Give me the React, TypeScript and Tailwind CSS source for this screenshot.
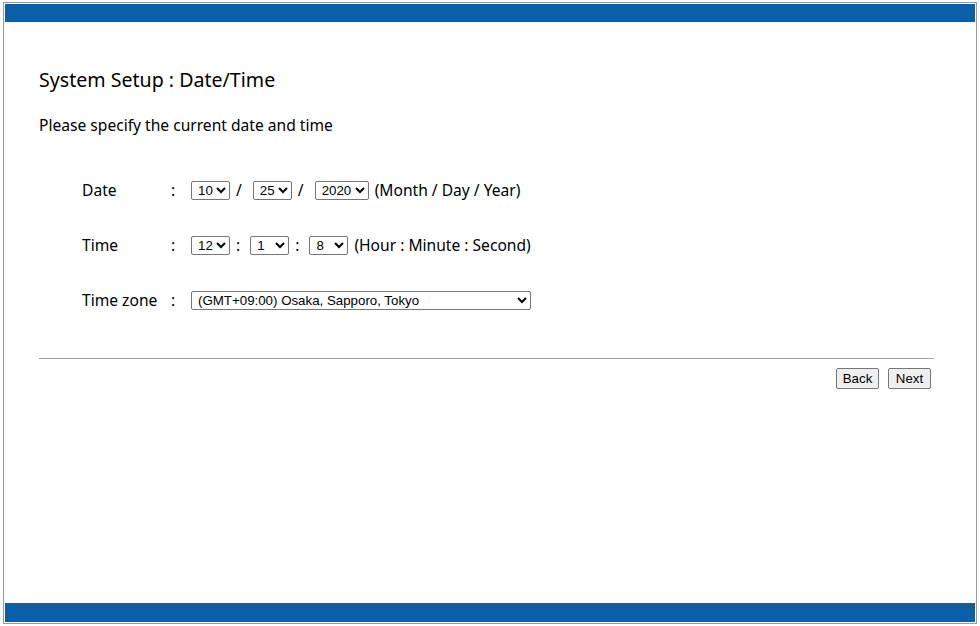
import { FC } from 'react';

const Select: FC<{ value: string; width: string }> = ({ value, width }) => {
    return (
        <select
            defaultValue={value}
            className={`${width} h-[19px] border border-solid border-[#767676] rounded-[2px] bg-white text-[13.3px] leading-[15px] text-black pl-[2px] font-['Liberation_Sans',Arial,sans-serif]`}
        >
            <option value={value}>{value}</option>
        </select>
    );
};

const App: FC = () => {
    return (
        <div className="w-[980px] h-[626px] bg-white pt-[2px] pl-[3px]">
            <div className="w-[974px] h-[622px] border border-solid border-[#9a9a9a] p-px flex flex-col text-black font-['Noto_Sans','Noto_Sans_CJK_KR',sans-serif]">
                <div className="h-[18px] bg-[#0a5fa7]" />
                <div className="flex-1 pl-[34px] pr-[41px]">
                    <div className="pt-[46px] text-[19.6px] leading-[24px]">
                        System Setup : Date/Time
                    </div>
                    <div className="mt-[23px] text-[15.6px] leading-[20px]">
                        Please specify the current date and time
                    </div>
                    <div className="mt-[46px] pl-[43px] flex flex-col gap-[36px] text-[15.6px] leading-[19px]">
                        <div className="flex items-center">
                            <span className="w-[89px]">Date</span>
                            <span className="w-[20px]">:</span>
                            <Select value="10" width="w-[39px]" />
                            <span className="ml-[6px] mr-[11px]">/</span>
                            <Select value="25" width="w-[39px]" />
                            <span className="ml-[6px] mr-[11px]">/</span>
                            <Select value="2020" width="w-[54px]" />
                            <span className="ml-[6px]">(Month / Day / Year)</span>
                        </div>
                        <div className="flex items-center">
                            <span className="w-[89px]">Time</span>
                            <span className="w-[20px]">:</span>
                            <Select value="12" width="w-[39px]" />
                            <span className="ml-[6px] mr-[10px]">:</span>
                            <Select value="1" width="w-[39px]" />
                            <span className="ml-[6px] mr-[10px]">:</span>
                            <Select value="8" width="w-[39px]" />
                            <span className="ml-[6px]">(Hour : Minute : Second)</span>
                        </div>
                        <div className="flex items-center">
                            <span className="w-[89px]">Time zone</span>
                            <span className="w-[20px]">:</span>
                            <Select value="(GMT+09:00) Osaka, Sapporo, Tokyo" width="w-[340px]" />
                        </div>
                    </div>
                    <div className="mt-[48px] border-t border-solid border-[#a0a0a0]" />
                    <div className="mt-[9px] flex justify-end gap-[9px] pr-[3px]">
                        <button className="w-[43px] h-[21px] border border-solid border-[#767676] rounded-[2px] bg-[#efefef] text-[13.3px] leading-[17px] font-['Liberation_Sans',Arial,sans-serif]">
                            Back
                        </button>
                        <button className="w-[43px] h-[21px] border border-solid border-[#767676] rounded-[2px] bg-[#efefef] text-[13.3px] leading-[17px] font-['Liberation_Sans',Arial,sans-serif]">
                            Next
                        </button>
                    </div>
                </div>
                <div className="h-[19px] bg-[#0a5fa7]" />
            </div>
        </div>
    );
};

export default App;
